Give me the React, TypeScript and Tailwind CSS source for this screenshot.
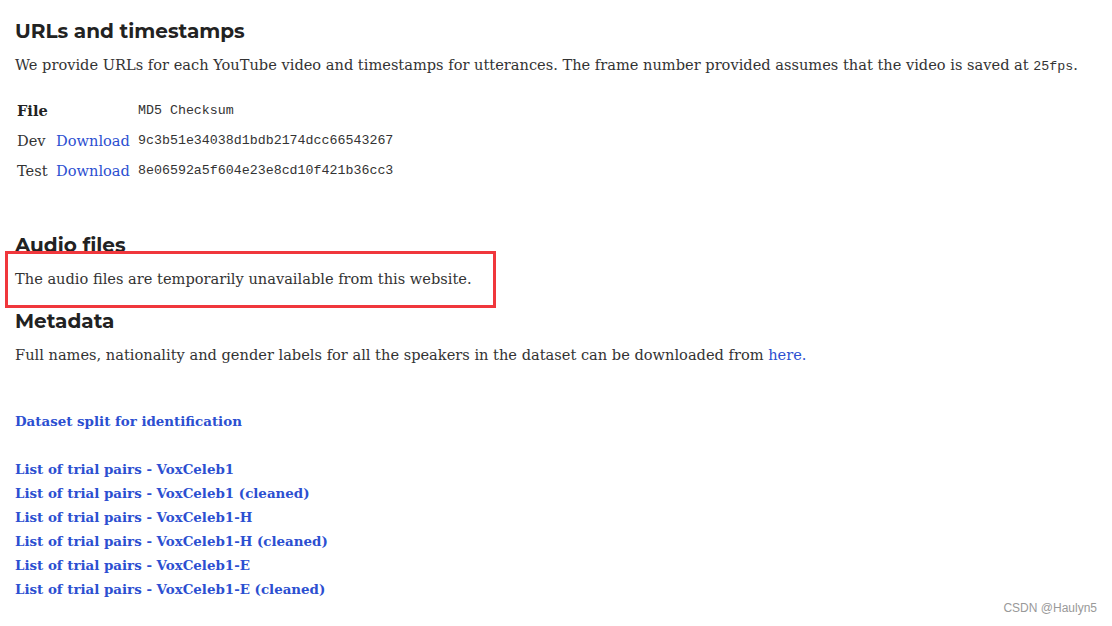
import React from "react";

const body = "font-['Roboto_Slab','DejaVu_Serif',serif]";
const heading = "font-['Montserrat','Inter','Open_Sans',sans-serif] font-bold text-[#222] text-[20px] leading-[24px]";
const mono = "font-['Liberation_Mono',monospace] text-[13.3px]";

const trialPairs = [
  "List of trial pairs - VoxCeleb1",
  "List of trial pairs - VoxCeleb1 (cleaned)",
  "List of trial pairs - VoxCeleb1-H",
  "List of trial pairs - VoxCeleb1-H (cleaned)",
  "List of trial pairs - VoxCeleb1-E",
  "List of trial pairs - VoxCeleb1-E (cleaned)",
];

export default function App() {
  return (
    <div className={`relative w-[1112px] h-[626px] bg-white overflow-hidden text-[#333] ${body} text-[14.6px]`}>
      <div className="px-[15px] pt-[19px]">
        <h2 className={heading}>URLs and timestamps</h2>
        <p className="mt-[11px] leading-[22px]">
          We provide URLs for each YouTube video and timestamps for utterances. The frame number provided assumes that the
          video is saved at <span className={mono}>25fps</span>.
        </p>

        <table className="mt-[18px] ml-[2px] border-collapse">
          <tbody>
            <tr className="h-[30px]">
              <td className="w-[39px] font-bold text-[#222]">File</td>
              <td className="w-[82px]"></td>
              <td className={mono}>MD5 Checksum</td>
            </tr>
            <tr className="h-[30px]">
              <td>Dev</td>
              <td className="text-[#2c4fd1]">Download</td>
              <td className={mono}>9c3b51e34038d1bdb2174dcc66543267</td>
            </tr>
            <tr className="h-[30px]">
              <td>Test</td>
              <td className="text-[#2c4fd1]">Download</td>
              <td className={mono}>8e06592a5f604e23e8cd10f421b36cc3</td>
            </tr>
          </tbody>
        </table>

        <h2 className={`${heading} mt-[47px]`}>Audio files</h2>
        <p className="mt-[11px] leading-[22px]">The audio files are temporarily unavailable from this website.</p>

        <h2 className={`${heading} mt-[19px]`}>Metadata</h2>
        <p className="mt-[11px] leading-[22px]">
          Full names, nationality and gender labels for all the speakers in the dataset can be downloaded from{" "}
          <span className="text-[#2c4fd1]">here.</span>
        </p>

        <div className="mt-[43px] font-bold text-[13.4px] text-[#2c4fd1] leading-[24px]">Dataset split for identification</div>

        <div className="mt-[24px] flex flex-col font-bold text-[13.4px] text-[#2c4fd1] leading-[24px]">
          {trialPairs.map((t) => (
            <span key={t}>{t}</span>
          ))}
        </div>
      </div>

      {/* annotation box */}
      <div className="absolute left-[5px] top-[251px] w-[491px] h-[57px] border-[3px] border-[#f0373c]" />

      <div className="absolute right-[15px] bottom-[9px] font-['Liberation_Sans',sans-serif] text-[12px] text-[#999]">
        CSDN @Haulyn5
      </div>
    </div>
  );
}
